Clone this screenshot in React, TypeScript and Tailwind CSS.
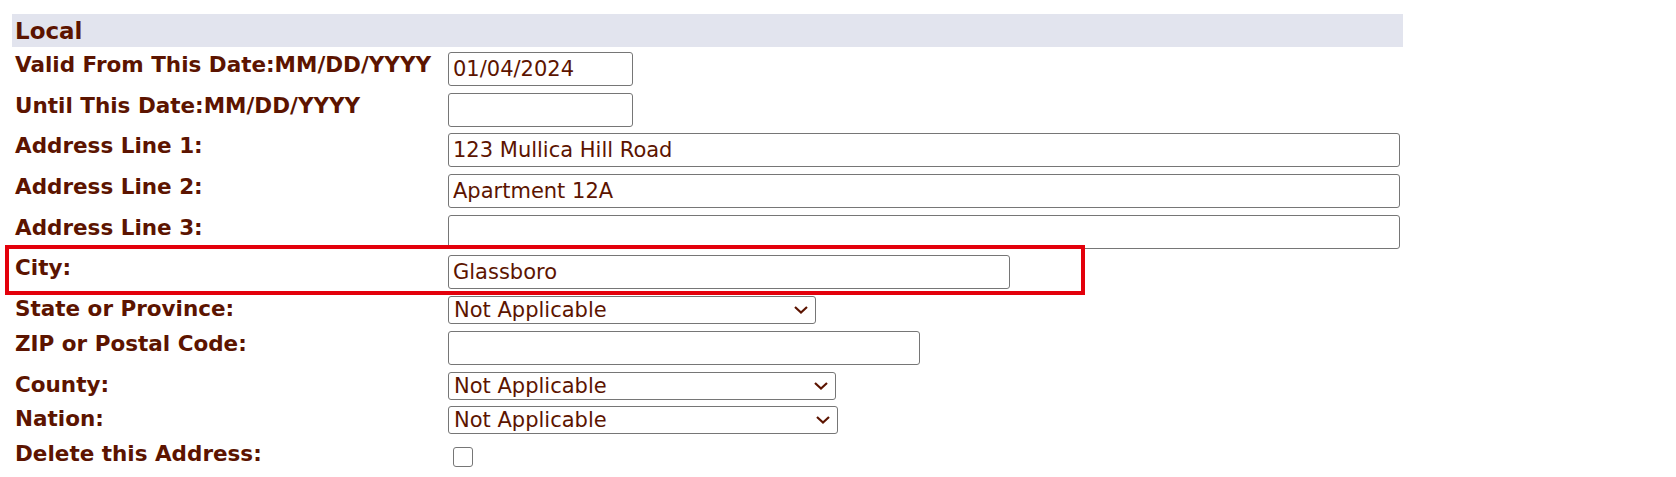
import React from "react";

const textColor = "text-[#5c1400]";

function Label({ children }: { children: React.ReactNode }) {
  return (
    <div className={`w-[436px] shrink-0 pl-[3px] text-[21.5px] font-bold leading-[25px] ${textColor}`}>
      {children}
    </div>
  );
}

function TextInput({ value = "", width }: { value?: string; width: string }) {
  return (
    <input
      type="text"
      defaultValue={value}
      className={`h-[34px] ${width} rounded-[3px] border border-[#767676] bg-white pl-[4px] text-[21px] ${textColor} outline-none font-['DejaVu_Sans',Verdana,sans-serif]`}
    />
  );
}

function Select({ width }: { width: string }) {
  return (
    <div className={`relative h-[28px] ${width}`}>
      <select
        defaultValue="na"
        className={`h-[28px] w-full appearance-none rounded-[3px] border border-[#767676] bg-white pl-[5px] text-[21px] leading-[26px] ${textColor} outline-none font-['DejaVu_Sans',Verdana,sans-serif]`}
      >
        <option value="na">Not Applicable</option>
      </select>
      <svg
        className="pointer-events-none absolute right-[8px] top-[10px]"
        width="14"
        height="8"
        viewBox="0 0 14 8"
        fill="none"
      >
        <path d="M1 1 L7 6.5 L13 1" stroke="#5c1400" strokeWidth="2.2" />
      </svg>
    </div>
  );
}

function Row({ label, children }: { label: string; children: React.ReactNode }) {
  return (
    <div className="flex items-start">
      <Label>{label}</Label>
      <div className="flex-1">{children}</div>
    </div>
  );
}

export default function App() {
  return (
    <div className="relative h-[477px] w-[1676px] overflow-hidden bg-white font-['DejaVu_Sans',Verdana,sans-serif]">
      <div className="w-[1391px] pl-0 ml-[12px] pt-[14px]">
        <div className={`h-[33px] bg-[#e2e4ee] pl-[3px] pt-[4px] text-[23px] font-bold leading-[27px] ${textColor}`}>
          Local
        </div>
        <div className="mt-[5px] flex flex-col gap-[6.7px] pr-[3px]">
          <Row label="Valid From This Date:MM/DD/YYYY">
            <TextInput value="01/04/2024" width="w-[185px]" />
          </Row>
          <Row label="Until This Date:MM/DD/YYYY">
            <TextInput width="w-[185px]" />
          </Row>
          <Row label="Address Line 1:">
            <TextInput value="123 Mullica Hill Road" width="w-full" />
          </Row>
          <Row label="Address Line 2:">
            <TextInput value="Apartment 12A" width="w-full" />
          </Row>
          <Row label="Address Line 3:">
            <TextInput width="w-full" />
          </Row>
          <Row label="City:">
            <TextInput value="Glassboro" width="w-[562px]" />
          </Row>
          <Row label="State or Province:">
            <Select width="w-[368px]" />
          </Row>
          <Row label="ZIP or Postal Code:">
            <TextInput width="w-[472px]" />
          </Row>
          <Row label="County:">
            <Select width="w-[388px]" />
          </Row>
          <Row label="Nation:">
            <Select width="w-[390px]" />
          </Row>
          <Row label="Delete this Address:">
            <input
              type="checkbox"
              className="ml-[5px] mt-[6px] block h-[20px] w-[20px] appearance-none rounded-[3px] border border-[#767676] bg-white"
            />
          </Row>
        </div>
      </div>
      <div className="pointer-events-none absolute left-[5px] top-[245px] h-[50px] w-[1080px] border-4 border-[#e3000b]" />
    </div>
  );
}
